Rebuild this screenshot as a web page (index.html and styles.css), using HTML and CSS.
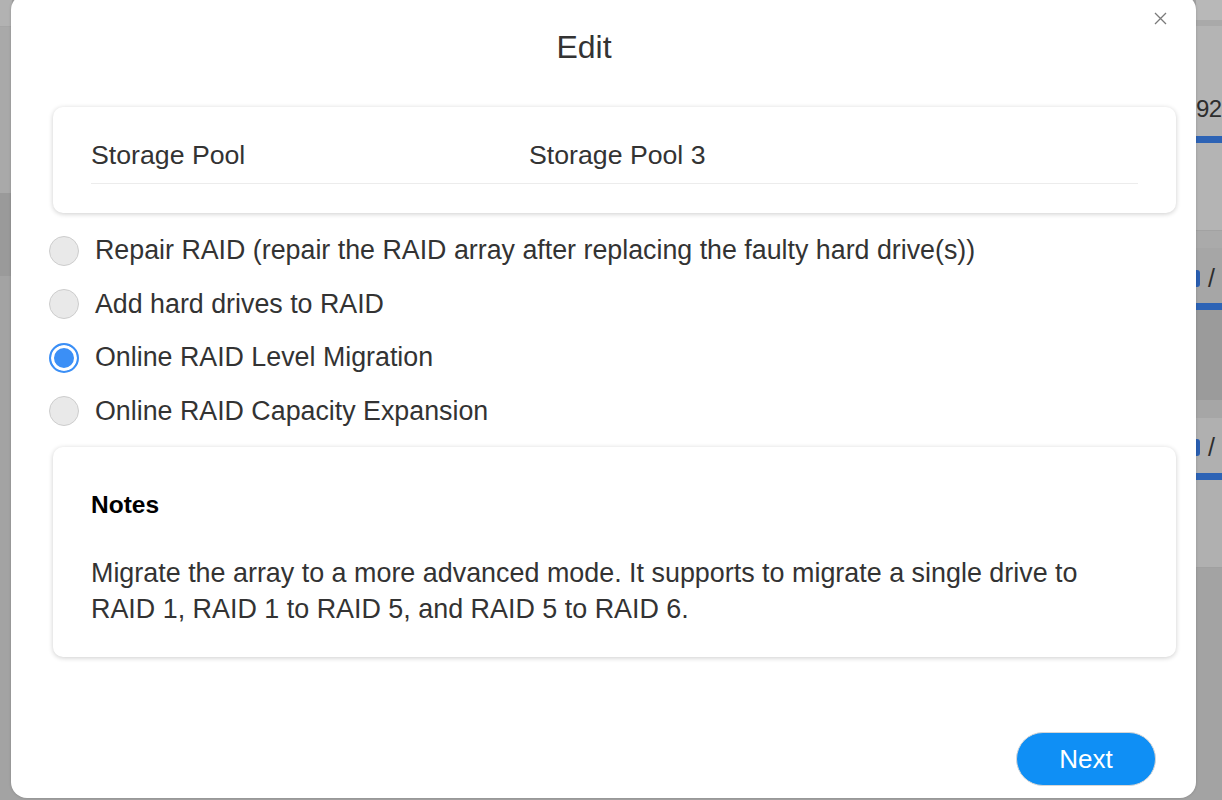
FILE: index.html
```html
<!DOCTYPE html>
<html lang="en">
<head>
<meta charset="utf-8">
<title>Edit</title>
<link rel="stylesheet" href="styles.css">
</head>
<body>
<div class="backdrop">
  <div class="strip strip-left">
    <div class="band l1"></div>
    <div class="band l2"></div>
    <div class="band l3"></div>
    <div class="band l4"></div>
  </div>
  <div class="spacer"></div>
  <div class="strip strip-right">
    <div class="band r1"></div>
    <div class="band r2"></div>
    <div class="band r3"><span class="bg-text num">92</span><span class="bar"></span></div>
    <div class="band r4"></div>
    <div class="band r5"><span class="bg-text"><i class="cut3"></i>/</span><span class="bar"></span></div>
    <div class="band r6"></div>
    <div class="band r7"></div>
    <div class="band r8"><span class="bg-text"><i class="cut3"></i>/</span><span class="bar"></span></div>
    <div class="band r9"></div>
  </div>
</div>

<div class="dialog">
  <button class="close" aria-label="Close">
    <svg width="13" height="13" viewBox="0 0 13 13"><path d="M1 1 L12 12 M12 1 L1 12" stroke="#7a7a7a" stroke-width="1.3" fill="none"/></svg>
  </button>
  <h1 class="title">Edit</h1>

  <div class="card info-card">
    <div class="info-row">
      <span class="info-label">Storage Pool</span>
      <span class="info-value">Storage Pool 3</span>
    </div>
  </div>

  <div class="options">
    <label class="option"><span class="radio"></span><span>Repair RAID (repair the RAID array after replacing the faulty hard drive(s))</span></label>
    <label class="option"><span class="radio"></span><span>Add hard drives to RAID</span></label>
    <label class="option"><span class="radio checked"></span><span>Online RAID Level Migration</span></label>
    <label class="option"><span class="radio"></span><span>Online RAID Capacity Expansion</span></label>
  </div>

  <div class="card notes-card">
    <h2 class="notes-title">Notes</h2>
    <p class="notes-text">Migrate the array to a more advanced mode. It supports to migrate a single drive to RAID 1, RAID 1 to RAID 5, and RAID 5 to RAID 6.</p>
  </div>

  <div class="footer">
    <button class="btn-next">Next</button>
  </div>
</div>
</body>
</html>
```

FILE: styles.css
```css
* { box-sizing: border-box; }
html, body { margin: 0; padding: 0; }
body {
  width: 1222px;
  height: 800px;
  overflow: hidden;
  position: relative;
  font-family: "Liberation Sans", Arial, Helvetica, sans-serif;
  color: #333;
  background: #a3a3a3;
}

/* backdrop (dimmed page behind the modal) */
.backdrop {
  display: flex;
  height: 800px;
}
.strip { display: flex; flex-direction: column; }
.strip-left { width: 12px; }
.spacer { flex: 1; }
.strip-right { width: 26px; overflow: hidden; }
.band { position: relative; overflow: hidden; }
.l1 { height: 27px; background: #b2b2b2; border-bottom: 1px solid #a5a5a5; }
.l2 { height: 166px; background: #a9a9a9; }
.l3 { height: 83px; background: #9a9a9a; }
.l4 { flex: 1; background: #a3a3a3; }

.r1 { height: 20px; background: #b8b8b8; }
.r2 { height: 6px; background: #a9a9a9; }
.r3 { height: 204px; background: #b4b4b4; display: flex; flex-direction: column; }
.r4 { height: 18px; background: #aaaaaa; border-top: 1px solid #a2a2a2; }
.r5 { height: 62px; background: #a6a6a6; display: flex; flex-direction: column; }
.r6 { height: 90px; background: #9b9b9b; }
.r7 { height: 18px; background: #a6a6a6; }
.r8 { height: 150px; background: #b0b0b0; display: flex; flex-direction: column; border-bottom: 1px solid #a0a0a0; }
.r9 { flex: 1; background: #a3a3a3; }

.bg-text {
  display: flex;
  align-items: center;
  font-size: 25px;
  color: #2d2d2d;
  white-space: nowrap;
  line-height: 30px;
  height: 30px;
}
.bg-text.num { font-size: 24px; letter-spacing: -0.5px; }
.cut3 {
  display: block;
  width: 4px;
  height: 17px;
  border-radius: 0 3px 3px 0;
  background: #2a5fb2;
  margin-right: 8px;
}
.r3 .bg-text { margin-top: 68px; }
.r3 .bar { margin-top: 12px; }
.r5 .bg-text { margin-top: 15px; }
.r5 .bar { margin-top: 10px; }
.r8 .bg-text { margin-top: 14px; }
.r8 .bar { margin-top: 11px; }
.bar { display: block; height: 7px; background: #2d63b5; }

/* modal */
.dialog {
  position: absolute;
  left: 11px;
  top: -6px;
  width: 1185px;
  height: 804px;
  background: #fff;
  border-radius: 16px;
  box-shadow: 0 0 3px rgba(0,0,0,0.18);
  padding: 33px 20px 0 38px;
  display: flex;
  flex-direction: column;
}
.close {
  position: absolute;
  top: 18px;
  right: 29px;
  width: 13px;
  height: 13px;
  padding: 0;
  border: 0;
  background: none;
  display: flex;
}
.title {
  margin: 0;
  padding-right: 57px;
  font-size: 32px;
  line-height: 40px;
  font-weight: normal;
  text-align: center;
  color: #333;
}

.card {
  background: #fff;
  border-radius: 10px;
  box-shadow: 0 1px 5px rgba(0,0,0,0.2);
  margin-left: 4px;
}
.info-card {
  margin-top: 40px;
  height: 106px;
  padding: 25px 38px 0 38px;
}
.info-row {
  display: flex;
  align-items: center;
  height: 52px;
  border-bottom: 1px solid #ececec;
  font-size: 26.7px;
  padding-bottom: 4px;
}
.info-label { width: 438px; }

.options {
  margin: 11px 0 9px;
  display: flex;
  flex-direction: column;
}
.option {
  display: flex;
  align-items: center;
  height: 53.5px;
  font-size: 26.8px;
  gap: 16px;
  color: #333;
}
.radio {
  width: 30px;
  height: 30px;
  border-radius: 50%;
  background: #e9e9e9;
  border: 1.5px solid #cdcdcd;
  flex: none;
}
.radio.checked {
  background: #3b8ff6;
  border: 2px solid #3b8ff6;
  box-shadow: inset 0 0 0 3px #fff;
}

.notes-card {
  height: 210px;
  padding: 40px 38px 0 38px;
}
.notes-title {
  margin: 0;
  font-size: 24.5px;
  line-height: 36px;
  font-weight: bold;
  color: #000;
}
.notes-text {
  margin: 32px 0 0;
  font-size: 26.9px;
  line-height: 36px;
  color: #333;
}

.footer {
  display: flex;
  justify-content: flex-end;
  margin-top: 75px;
  padding-right: 20px;
}
.btn-next {
  width: 140px;
  height: 54px;
  border-radius: 27px;
  background: #0f8ff5;
  border: 1px solid #d6d6d6;
  color: #fff;
  font-family: "Liberation Sans", Arial, sans-serif;
  font-size: 26px;
  padding: 0;
}
```
